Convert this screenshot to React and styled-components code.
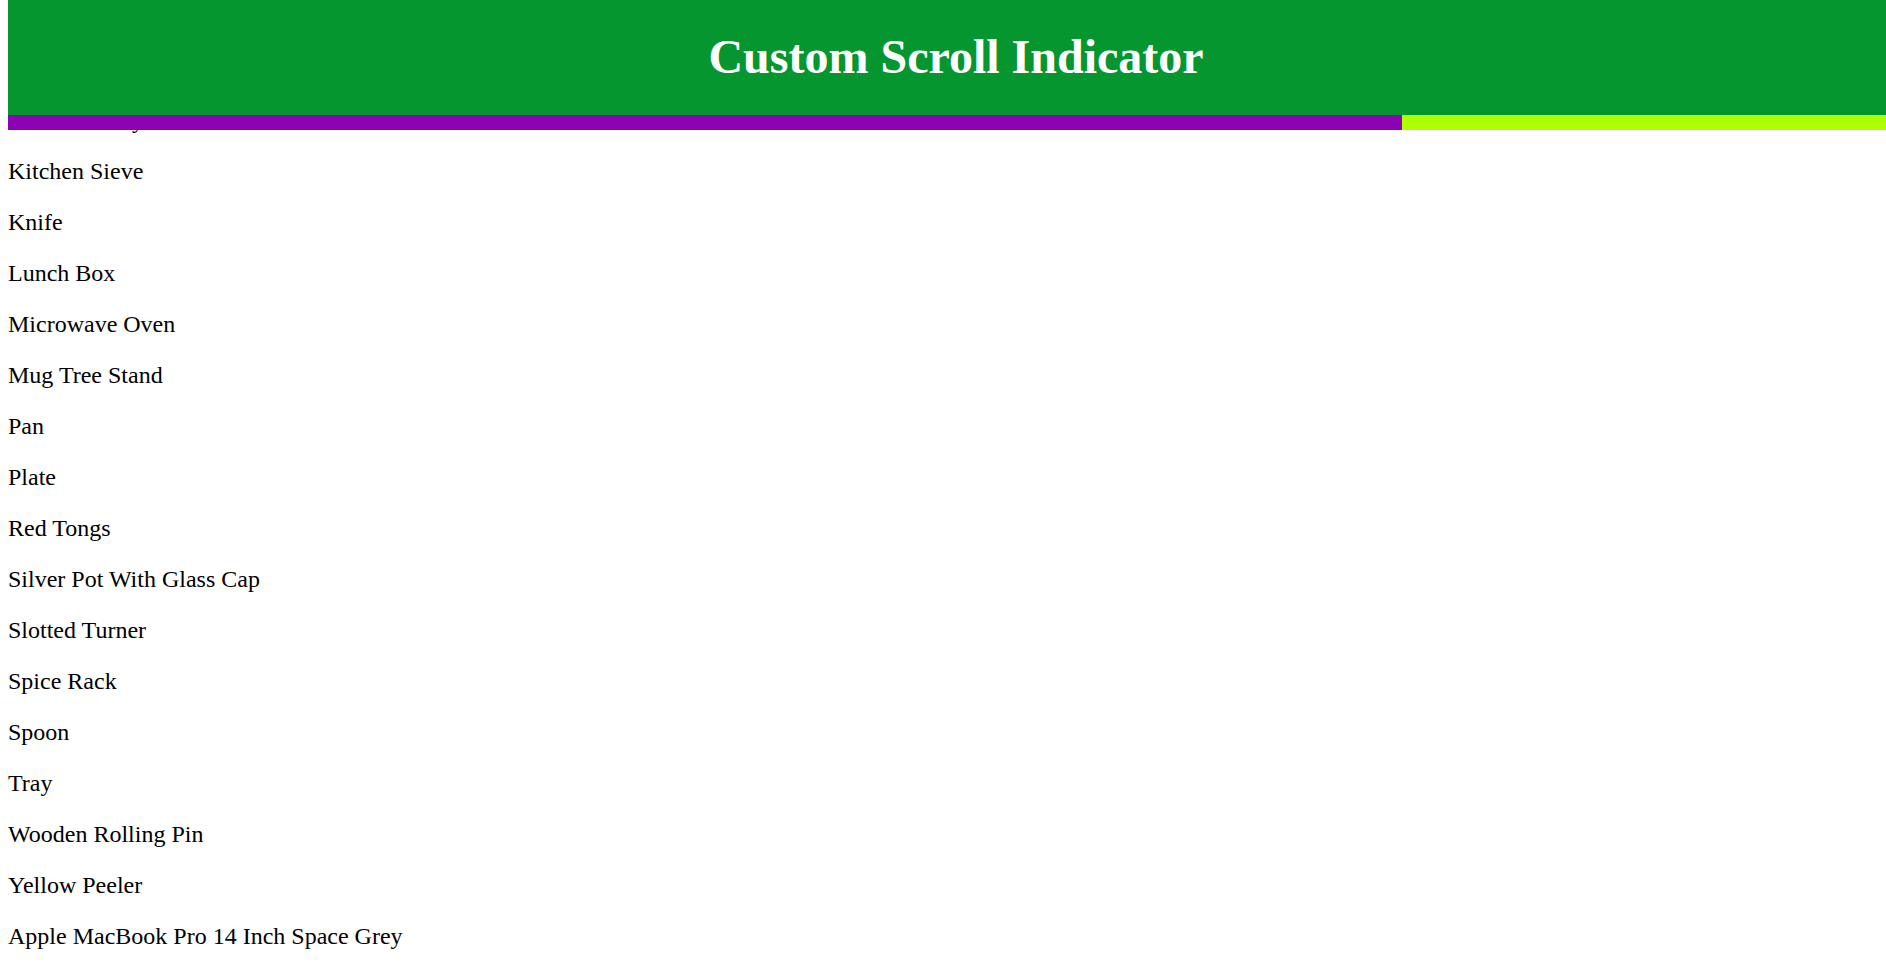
import { useLayoutEffect, useState } from "react";
import styled, { createGlobalStyle } from "styled-components";

const items = [
  "Baking Tray",
  "Blue Mixing Bowl",
  "Bottle Opener",
  "Bread Toaster",
  "Chopping Board",
  "Coffee Mug",
  "Cooking Pot",
  "Cutlery Set",
  "Dish Rack",
  "Egg Beater",
  "Frying Pan",
  "Glass Jar",
  "Ice Cube Tray",
  "Kitchen Sieve",
  "Knife",
  "Lunch Box",
  "Microwave Oven",
  "Mug Tree Stand",
  "Pan",
  "Plate",
  "Red Tongs",
  "Silver Pot With Glass Cap",
  "Slotted Turner",
  "Spice Rack",
  "Spoon",
  "Tray",
  "Wooden Rolling Pin",
  "Yellow Peeler",
  "Apple MacBook Pro 14 Inch Space Grey",
  "Apple iPhone 13 Pro Max",
  "Samsung Galaxy S22 Ultra",
  "Sony WH-1000XM4 Headphones",
  "Dell XPS 13 Laptop",
];

// where the page was left when the shot was taken
const START_SCROLL = 607;

const App = () => {
  const [progress, setProgress] = useState(0);

  useLayoutEffect(() => {
    const onScroll = () => {
      const el = document.documentElement;
      const max = el.scrollHeight - el.clientHeight;
      setProgress(max > 0 ? (el.scrollTop / max) * 100 : 0);
    };
    window.scrollTo(0, START_SCROLL);
    onScroll();
    window.addEventListener("scroll", onScroll);
    return () => window.removeEventListener("scroll", onScroll);
  }, []);

  return (
    <>
      <GlobalStyle />
      <Header>
        <Title>Custom Scroll Indicator</Title>
        <Track>
          <Bar style={{ width: `${progress}%` }} />
        </Track>
      </Header>
      <Main>
        {items.map((item) => (
          <Item key={item}>{item}</Item>
        ))}
      </Main>
    </>
  );
};

const GlobalStyle = createGlobalStyle`
  html {
    scrollbar-width: none;
  }

  html::-webkit-scrollbar {
    display: none;
  }

  body {
    margin: 8px;
    font-family: "Liberation Serif", "Times New Roman", serif;
    color: #000;
    background: #fff;
  }
`;

const Header = styled.header`
  position: fixed;
  top: 0;
  width: 100%;
  z-index: 10;
  background-color: #06962f;
`;

const Title = styled.h1`
  margin: 0;
  padding: 29px 0 31px 10px;
  text-align: center;
  color: #fff;
  font-size: 48px;
  font-weight: bold;
`;

const Track = styled.div`
  width: 100%;
  height: 15px;
  background-color: #abff00;
`;

const Bar = styled.div`
  height: 100%;
  background-color: #8b03b4;
`;

const Main = styled.main`
  padding-top: 70px;
`;

const Item = styled.p`
  margin: 24px 0;
  font-size: 24px;
`;

export default App;
